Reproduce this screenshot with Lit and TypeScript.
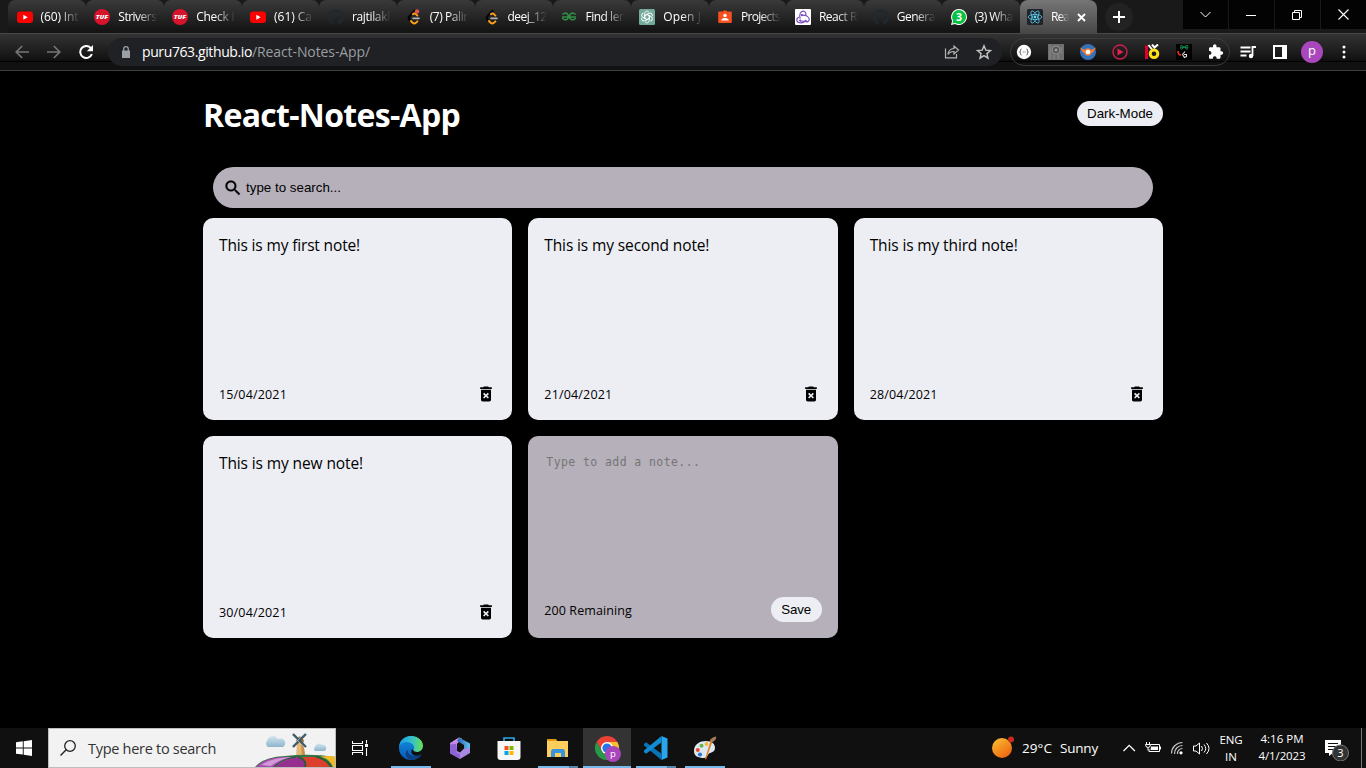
import { LitElement, html, css, svg, nothing } from "lit";
import { customElement, property } from "lit/decorators.js";

/* Text run that spreads its letters over a given width. */
@customElement("fit-text")
class FitText extends LitElement {
  @property({ type: Number }) w = 0;
  @property() text = "";
  static styles = css`
    :host { display: inline-block; white-space: pre; }
    .run { display: inline-block; }
  `;
  render() {
    return html`<span class="run">${this.text}</span>`;
  }
  updated() {
    const run = this.renderRoot.querySelector(".run") as HTMLElement;
    run.style.letterSpacing = "0px";
    const natural = run.getBoundingClientRect().width;
    if (this.w > 0) run.style.letterSpacing = (this.w - natural) / this.text.length + "px";
  }
}

const t = (text: string, w: number) => html`<fit-text .text=${text} .w=${w}></fit-text>`;
const icon = (size: number, box: string, body: unknown) =>
  html`<svg width=${size} height=${size} viewBox=${box}>${body}</svg>`;

const youtube = icon(16, "0 0 16 16", svg`<rect y="2.5" width="16" height="11.5" rx="3" fill="#f00"/><path d="M6.3 5.7v5l4.4-2.5z" fill="#fff"/>`);
const tuf = icon(16, "0 0 16 16", svg`<circle cx="8" cy="8" r="8" fill="#d6142c"/><text x="8" y="10" text-anchor="middle" font-family="Open Sans" font-size="5.6" font-weight="800" font-style="italic" fill="#fff" textLength="12.5" lengthAdjust="spacingAndGlyphs">TUF</text>`);
const github = icon(16, "0 0 16 16", svg`<path fill="#202830" d="M8 0C3.58 0 0 3.58 0 8c0 3.54 2.29 6.53 5.47 7.59.4.07.55-.17.55-.38v-1.49c-2.01.37-2.53-.49-2.69-.94-.09-.23-.48-.94-.82-1.13-.28-.15-.68-.52-.01-.53.63-.01 1.08.58 1.23.82.72 1.21 1.87.87 2.33.66.07-.52.28-.87.51-1.07-1.78-.2-3.64-.89-3.64-3.95 0-.87.31-1.59.82-2.15-.08-.2-.36-1.02.08-2.12 0 0 .67-.21 2.2.82a7.6 7.6 0 0 1 4 0c1.53-1.04 2.2-.82 2.2-.82.44 1.1.16 1.92.08 2.12.51.56.82 1.27.82 2.15 0 3.07-1.87 3.75-3.65 3.95.29.25.54.73.54 1.48v2.2c0 .21.15.46.55.38A8 8 0 0 0 16 8c0-4.42-3.58-8-8-8z"/>`);
const leet = (dot: boolean) => icon(16, "0 0 16 16", svg`<path d="M9.200 1.200 3.400 7.300a2.200 2.200 0 0 0 0 3.200l1.300 1.300" fill="none" stroke="#050505" stroke-width="2.200"/><path d="M5 12 6.600 13.800a2.400 2.400 0 0 0 3.300 0l1.500-1.500M7 5.200a2 2 0 0 1 2.900-.1l1.500 1.500" fill="none" stroke="#ffa116" stroke-width="1.900" stroke-linecap="round"/><path d="M7 9.300h6" stroke="#b3b3b3" stroke-width="1.700" stroke-linecap="round"/>${dot ? svg`<circle cx="11" cy="2.500" r="2.200" fill="#e5534b"/>` : nothing}`);
const gfg = icon(16, "0 0 16 16", svg`<path d="M1 8h14M1.5 5.6A3.3 3.3 0 1 1 1.3 9M14.5 5.6A3.3 3.3 0 1 0 14.7 9" fill="none" stroke="#2f8d46" stroke-width="1.6"/>`);
const openai = icon(16, "0 0 16 16", svg`<rect width="16" height="16" rx="1.5" fill="#74aa9c"/><g fill="none" stroke="#fff" stroke-width=".95">${[0, 60, 120, 180, 240, 300].map((a) => svg`<path transform="rotate(${a} 8 8)" d="M5.7 7V4.6a2.4 2.4 0 0 1 4.2-1.6M5.7 6.7 8 5.4l3.1 1.8"/>`)}</g>`);
const classroom = icon(16, "0 0 16 16", svg`<rect x="1.2" y="2.6" width="13.6" height="11.4" rx="1" fill="#f4511e"/><rect x="6" y="1.6" width="4" height="2.2" rx=".8" fill="#f4511e"/><circle cx="8" cy="6.5" r="1.7" fill="#fff"/><path d="M4.4 11.6V10.4Q6 9 8 9t3.6 1.4v1.2z" fill="#fff"/>`);
const redux = icon(16, "0 0 16 16", svg`<rect width="16" height="16" rx="1" fill="#fff"/><g fill="none" stroke="#764abc" stroke-width="1.15"><path d="M5.200 9.800C3.800 5.500 5.700 2.200 8 2.200c2.300 0 3.400 2 2.800 4.500"/><path d="M10.300 12c-3 3-8.500 2-8.500-1 0-1.500 1-2.600 2.200-2.800"/><path d="M6.800 6.200c4.500-.6 7.900 2.200 7.400 4.700-.3 1.700-2.200 2.400-3.700 1.600L5.400 12"/></g><circle cx="6.900" cy="6.200" r="1.100" fill="#764abc"/><circle cx="5.200" cy="11.600" r="1.100" fill="#764abc"/><circle cx="10.700" cy="11.900" r="1.100" fill="#764abc"/>`);
const whatsapp = icon(16, "0 0 16 16", svg`<path d="M8 0a8 8 0 1 1-3.900 15L0 16l1.100-4A8 8 0 0 1 8 0z" fill="#fff"/><path d="M8 1a7 7 0 1 1-3.600 13l-3 .6.8-2.900A7 7 0 0 1 8 1z" fill="#0ac143"/><text x="8" y="12" text-anchor="middle" font-family="Open Sans" font-size="10.500" font-weight="700" fill="#fff">3</text>`);
const react = icon(16, "0 0 16 16", svg`<rect width="16" height="16" rx="1.500" fill="#20232a"/><g fill="none" stroke="#61dafb" stroke-width=".7"><ellipse cx="8" cy="8" rx="6.800" ry="2.600"/><ellipse cx="8" cy="8" rx="6.800" ry="2.600" transform="rotate(60 8 8)"/><ellipse cx="8" cy="8" rx="6.800" ry="2.600" transform="rotate(120 8 8)"/></g><circle cx="8" cy="8" r="1.400" fill="#61dafb"/>`);

const tabs: [unknown, string, number][] = [
  [youtube, "(60) Int", 38], [tuf, "Strivers", 38], [tuf, "Check i", 38], [youtube, "(61) Ca", 38],
  [github, "rajtilakl", 38], [leet(true), "(7) Palir", 38], [leet(false), "deej_12", 39],
  [gfg, "Find ler", 38], [openai, "Open J", 38], [classroom, "Projects", 39], [redux, "React R", 38],
  [github, "Genera", 38], [whatsapp, "(3) Wha", 38],
];

const extensions = [
  svg`<circle cx="8" cy="8" r="7.200" fill="#fff"/><path d="M5.500 5q-1 0-1 1.500T3.600 8q.9 0 .9 1.500T5.500 11M10.500 5q1 0 1 1.500T12.400 8q-.9 0-.9 1.500t-1 1.500M6.800 8h.8M8.600 8h.8" fill="none" stroke="#444" stroke-width=".9"/>`,
  svg`<rect width="16" height="16" fill="#6e6e6e"/><circle cx="8" cy="6" r="4" fill="#555" stroke="#929292"/><circle cx="8" cy="6" r="1.500" fill="#999"/><path d="M2 1v14M14 3q-2 4 0 7M6 11v4M10 10l1 5" stroke="#888" fill="none"/>`,
  svg`<circle cx="8" cy="8" r="8" fill="#3572b8"/><path d="M0 3.500 5 6h6l5-2.500-3 5-3 1H6l-3-1z" fill="#f0803c"/><circle cx="8" cy="8" r="3.700" fill="#f0803c"/><circle cx="8" cy="8" r="2.300" fill="#fff"/>`,
  svg`<circle cx="8" cy="8" r="7" fill="none" stroke="#c4214b" stroke-width="1.500"/><path d="M5.500 4.500v7L11.500 8z" fill="#e0234e"/>`,
  svg`<path d="M2.500 1.500v13.500" stroke="#e3002b" stroke-width="3"/><path d="m4.500 1 4 5M8 .5l2.500 3L14 .5" stroke="#fff" stroke-width="2" fill="none"/><circle cx="10" cy="9.800" r="3.800" fill="none" stroke="#ffe019" stroke-width="3"/>`,
  svg`<rect width="16" height="16" fill="#000"/><path d="M4 3.200h8.500M4.300 1.800a1.800 1.800 0 1 1 0 2.800M12 1.800a1.800 1.800 0 1 0 0 2.800" fill="none" stroke="#159a5c" stroke-width="1"/><path d="M2 7q0 4 3 4" fill="none" stroke="#ff2a1a" stroke-width="1.600"/><path d="M9 7.500 6.500 10.500l2 3 2-1v-2H8" fill="none" stroke="#ddd" stroke-width="1.100"/>`,
  svg`<path d="M13.500 7.300h-1V4.600c0-.8-.6-1.400-1.400-1.400H8.500V2a1.700 1.700 0 0 0-3.500 0v1.200H2.300C1.500 3.200 1 3.800 1 4.600v2.500h1a1.900 1.900 0 0 1 0 3.700H1v2.600c0 .8.500 1.400 1.300 1.400h2.600v-1a1.900 1.900 0 0 1 3.700 0v1h2.500c.8 0 1.400-.6 1.400-1.400v-2.700h1a1.700 1.700 0 0 0 0-3.400z" fill="#fff"/>`,
];

const trash = icon(20, "0 0 24 24", svg`<path d="M6 19c0 1.100.9 2 2 2h8c1.100 0 2-.9 2-2V7H6v12zm2.460-7.120 1.410-1.410L12 12.590l2.120-2.120 1.410 1.410L13.410 14l2.120 2.120-1.410 1.410L12 15.410l-2.120 2.120-1.410-1.410L10.590 14zM15.500 4l-1-1h-5l-1 1H5v2h14V4z"/>`);

const notes: [string, number, string][] = [
  ["This is my first note!", 141, "15/04/2021"],
  ["This is my second note!", 165, "21/04/2021"],
  ["This is my third note!", 148, "28/04/2021"],
  ["This is my new note!", 144, "30/04/2021"],
];

const edge = icon(24, "0 0 24 24", svg`<defs><linearGradient id="ea" x2="1"><stop stop-color="#1b9de2"/><stop offset=".55" stop-color="#35c1c9"/><stop offset="1" stop-color="#6be052"/></linearGradient><linearGradient id="eb" y2="1" x2="0"><stop stop-color="#1491df"/><stop offset="1" stop-color="#0759b5"/></linearGradient></defs><circle cx="12" cy="12" r="12" fill="url(#eb)"/><path d="M0 12C0 5 5 0 12 0s12 4.500 12 10c0 3.500-2.500 6-6 6-2.500 0-4.200-1-3.600-2.200C17 10 12 5.500 7 6 3 6.300 0 9 0 12z" fill="url(#ea)"/><path d="M8.500 13.500C8 18 13 20.500 17 20c2-.2 3.700-1.200 4.800-1.500.5 0 .6.400.2 1A12 12 0 0 1 13 24C7 23 5 17 8.500 13.500z" fill="#0c3f83"/><path d="M14.400 13.800C13.800 15 15.500 16 18 16c3.500 0 6-2.500 6-6l2 6-4 2.500c-2.500 1.500-6 1.700-8 .2-2-1.500-2.200-4-.8-5.500z" fill="#101010"/>`);
const m365 = icon(24, "0 0 24 24", svg`<defs><linearGradient id="ma" y2="1" x2="0"><stop stop-color="#e8a8f4"/><stop offset="1" stop-color="#6a47c9"/></linearGradient><linearGradient id="mb" x2="1"><stop stop-color="#275cb5"/><stop offset="1" stop-color="#62c4ee"/></linearGradient></defs><path d="m2 7 9-5.500 3 1L9 8v8L5 18.500l-3-2z" fill="url(#ma)"/><path d="m11 1.500 11 6v8l-6-3V9L9 5z" fill="url(#mb)"/><path d="m22 12-6 .5-4 4L9 15l-5 3 8 5 10-6z" fill="#a788e2"/><path d="M2 8.500 8 8v8l4 2.500V23l-10-5.500z" fill="#8e62d3"/>`);
const store = icon(24, "0 0 24 24", svg`<path d="M7 6V2h10v4" fill="none" stroke="#2aa9e8" stroke-width="1.600"/><path d="M.5 5h23v16q0 3-3 3h-17q-3 0-3-3z" fill="#f7f7f7"/><path d="M7.500 10h4v4h-4z" fill="#f25022"/><path d="M12.500 10h4v4h-4z" fill="#7fba00"/><path d="M7.500 15h4v4h-4z" fill="#00a4ef"/><path d="M12.500 15h4v4h-4z" fill="#ffb900"/>`);
const folder = icon(24, "0 0 24 24", svg`<path d="M1 3h9l2 3H1z" fill="#e09a12"/><path d="M1 5h21v16H1z" fill="#fdce5c"/><path d="M5 21v-5.500Q5 13 7 13h10q2 0 2 2.500V21h-4v-4H9v4z" fill="#3793dc"/>`);
const chrome = html`<svg width="26" height="26" viewBox="0 0 26 26"><path d="M12 0a12 12 0 0 1 10.400 6H12L6.800 15 1.600 6A12 12 0 0 1 12 0z" fill="#ea4335"/><path d="M22.400 6A12 12 0 0 1 12 24l5.200-9L12 6z" fill="#fbc02d"/><path d="M1.600 6 6.800 15q2 3.500 6 3L12 24A12 12 0 0 1 1.600 6z" fill="#279847"/><circle cx="12" cy="12" r="6" fill="#fff"/><circle cx="12" cy="12" r="4.600" fill="#2773e8"/><circle cx="18" cy="18" r="8" fill="#a845ba"/><text x="18" y="21" text-anchor="middle" fill="#fff" font-family="Open Sans" font-size="9.500">p</text></svg>`;
const vscode = icon(24, "0 0 24 24", svg`<path d="m17.500 0 6 2.500v19l-6 2.500z" fill="#29a5ee"/><path d="m0 8 2-1.800 15.500 11.600V24L0 9.500z" fill="#0873b7"/><path d="m0 16 2 1.800L17.500 6.200V0L0 14.500z" fill="#128bd2"/>`);
const paint = icon(24, "0 0 24 24", svg`<path d="M1 15C1 8 7 5 13 5s9 3 9 7c0 3-2 4-5 5s-2 5-6 5C5 22 1 20 1 15z" fill="#dce9f2"/><circle cx="4.800" cy="14" r="2" fill="#e64a34"/><circle cx="8.500" cy="9.800" r="2" fill="#69b342"/><circle cx="13.500" cy="8" r="1.900" fill="#f4b63f"/><circle cx="7" cy="18.500" r="2.100" fill="#2c76cb"/><path d="m20 4-7 19.500-1-.5L18 3z" fill="#e58224"/><path d="M17 5q0-3 6-4.500Q24 3 20 6z" fill="#a57a54"/>`);

const apps: [unknown, string][] = [[edge, "open"], [m365, ""], [store, ""], [folder, "open stack"], [chrome, "open active"], [vscode, "open stack"], [paint, "open"]];

@customElement("browser-chrome")
class BrowserChrome extends LitElement {
  static styles = css`
    :host { display: block; height: 71px; font-family: "Open Sans", sans-serif; color: #fff; flex: none; }
    svg { display: block; flex: none; }
    .strip { height: 33px; display: flex; padding-left: 8px; background: #191919; }
    .tab { flex: none; width: 77.850px; box-sizing: border-box; height: 33px; display: flex; align-items: center; gap: 8px; padding: 1px 0 0 8.500px; font-size: 12px; border-radius: 7px 7px 0 0; background: linear-gradient(#3a3a3a, #151515 90%); }
    .tab .label { flex: none; width: 38.500px; white-space: nowrap; line-height: 20px; -webkit-mask-image: linear-gradient(90deg, #000 48%, transparent 102%); }
    .tab .bar { width: 1px; height: 20px; background: #646464; margin-left: -1px; flex: none; }
    .tab.live { background: linear-gradient(#767676, #474747); width: 77px; border-radius: 8px 8px 0 0; padding-left: 7px; }
    .tab.live .label { width: 18px; }
    .plus { flex: none; width: 28px; height: 28px; border-radius: 50%; background: #222; margin: 3px 0 0 8px; display: grid; place-items: center; }
    .win { margin-left: auto; display: flex; gap: 1px; background: #191919; height: 29px; }
    .win div { width: 45px; background: #030303; display: grid; place-items: center; }
    .win svg { margin-right: 1px; }
    .bar2 { height: 37px; box-sizing: border-box; border-top: 1px solid #484848; background: linear-gradient(#333, #151515 65%, #0d0d0d 76%, #000 76%, #000 79%, #111 79%); display: flex; align-items: center; padding: 0 6px; }
    .cell { width: 32px; display: grid; place-items: center; flex: none; }
    .omni { flex: none; width: 894px; height: 28px; border-radius: 14px; background: #202124; margin-left: 6px; display: flex; align-items: center; box-sizing: border-box; padding: 0 2px 0 12px; font-size: 14px; }
    .url { margin-left: 10px; flex: 1; line-height: 20px; display: flex; }
    .dim { color: #9a9ea3; }
    .ext { flex: none; display: flex; width: 220px; height: 28px; align-items: center; border: 1px solid #3c3c3c; box-sizing: border-box; border-radius: 14px; margin: 0 2px 0 8px; }
    .ext .cell:first-child { width: 28px; margin: 0 2px 0 -1px; }
    .line { height: 1px; background: #3d4040; }
    .avatar { width: 22px; height: 22px; border-radius: 50%; background: #a947bc; text-align: center; font-size: 13px; line-height: 19px; }
  `;
  render() {
    return html`
      <div class="strip">
        ${tabs.map(([i, s, w], n) => html`<div class="tab">${i}<div class="label">${t(s, w)}</div>${n < 12 ? html`<div class="bar"></div>` : nothing}</div>`)}
        <div class="tab live">${react}<div class="label">${t("Rea", 18)}</div>${icon(9, "0 0 9 9", svg`<path d="m1 1 7 7M8 1 1 8" stroke="#fff" stroke-width="1.900"/>`)}</div>
        <div class="plus">${icon(12, "0 0 12 12", svg`<path d="M6 0v12M0 6h12" stroke="#fff" stroke-width="2"/>`)}</div>
        <div class="win">
          <div>${icon(11, "0 0 11 11", svg`<path d="m.5 3 5 5 5-5" fill="none" stroke="#fff" stroke-width="1"/>`)}</div>
          <div>${icon(10, "0 0 10 10", svg`<path d="M0 5.500h10" stroke="#fff"/>`)}</div>
          <div>${icon(10, "0 0 10 10", svg`<path d="M.5 2.500h7v7h-7zM2.500 2.500v-2h7v7h-2" fill="none" stroke="#fff"/>`)}</div>
          <div>${icon(11, "0 0 11 11", svg`<path d="m.5.500 10 10M10.500.500l-10 10" stroke="#fff" stroke-width="1.100"/>`)}</div>
        </div>
      </div>
      <div class="bar2">
        <div class="cell">${icon(14, "0 0 14 14", svg`<path d="M14 7H1.200M7.200 1 1.200 7l6 6" fill="none" stroke="#757575" stroke-width="1.700"/>`)}</div>
        <div class="cell">${icon(14, "0 0 14 14", svg`<path d="M0 7h12.800M6.800 1l6 6-6 6" fill="none" stroke="#757575" stroke-width="1.700"/>`)}</div>
        <div class="cell">${icon(14, "0 0 14 14", svg`<path d="M12 3.300A6 6 0 1 0 12.900 9" fill="none" stroke="#fff" stroke-width="2"/><path d="M14 0v6.200H7.800z" fill="#fff"/>`)}</div>
        <div class="omni">
          ${icon(12, "0 0 12 12", svg`<path d="M2 4.500h8V12H2z" fill="#9aa0a6"/><path d="M3.700 5V3a2.300 2.300 0 0 1 4.600 0v2" fill="none" stroke="#9aa0a6" stroke-width="1.300"/>`)}
          <div class="url">${t("puru763.github.io", 110)}<span class="dim">${t("/React-Notes-App/", 118)}</span></div>
          <div class="cell">${icon(16, "0 0 16 16", svg`<path d="M1.500 4.500v9.300h11V10M10 4.500V2l4.500 4L10 10V7.500C7 7.500 5.200 8.500 4 10.500 4.300 7 6.500 4.800 10 4.500z" fill="none" stroke="#b5b5b5" stroke-width="1.200"/>`)}</div>
          <div class="cell">${icon(16, "0 0 16 16", svg`<path d="m8 1.800 1.800 4.300 4.700.4-3.600 3.100L12 14.200 8 11.700l-4 2.500 1.100-4.600-3.600-3.100 4.700-.4z" fill="none" stroke="#c4c4c4" stroke-width="1.400"/>`)}</div>
        </div>
        <div class="ext">${extensions.map((e) => html`<div class="cell">${icon(16, "0 0 16 16", e)}</div>`)}</div>
        <div class="cell">${icon(16, "0 0 16 16", svg`<path d="M.5 3.500h10M.5 7.500h10M.5 11.500h6M12.500 12V3H16" fill="none" stroke="#fff" stroke-width="1.800"/><circle cx="11" cy="12" r="2.200" fill="#fff"/>`)}</div>
        <div class="cell">${icon(14, "0 0 14 14", svg`<path d="M1 1h12v12H1z" fill="none" stroke="#fff" stroke-width="2"/><path d="M9 1h4v12H9z" fill="#fff"/>`)}</div>
        <div class="cell"><div class="avatar">p</div></div>
        <div class="cell">${icon(14, "0 0 14 14", svg`<g fill="#fff"><circle cx="7" cy="2" r="1.500"/><circle cx="7" cy="7" r="1.500"/><circle cx="7" cy="12" r="1.500"/></g>`)}</div>
      </div>
      <div class="line"></div>`;
  }
}

@customElement("notes-app")
class NotesApp extends LitElement {
  static styles = css`
    :host { display: block; height: 657px; background: #000; font-family: "Open Sans", sans-serif; }
    svg { display: block; flex: none; }
    .wrap { width: 960px; margin: 0 auto; }
    .head { height: 96px; box-sizing: border-box; padding-top: 22px; display: flex; justify-content: space-between; align-items: flex-start; }
    h1 { margin: 0; color: #fff; font-size: 32px; line-height: 43px; font-weight: 700; }
    .pill { background: #edeef4; color: #000; border-radius: 15px; height: 25px; display: grid; place-items: center; font: 13.333px "Liberation Sans", sans-serif; }
    .mode { width: 86px; margin-top: 8px; }
    .search { margin: 0 10px; height: 41px; border-radius: 21px; background: #b6b0ba; display: flex; align-items: center; padding-left: 10px; gap: 3px; font: 13.333px "Liberation Sans", sans-serif; }
    .grid { margin-top: 10px; display: grid; grid-template-columns: repeat(3, 1fr); grid-auto-rows: 202px; gap: 16px; }
    .note { background: #edeef4; border-radius: 10px; padding: 16px; display: flex; flex-direction: column; justify-content: space-between; font-size: 15.500px; line-height: 22px; }
    .foot { display: flex; align-items: center; justify-content: space-between; font-size: 12.500px; line-height: 18px; height: 20px; }
    .foot fit-text { margin-top: 1px; }
    .foot svg { margin-right: .4px; margin-bottom: 1px; }
    .new { background: #b6b0ba; }
    .hint { font: 11.500px "DejaVu Sans Mono", monospace; line-height: 20px; color: #757575; padding-left: 2px; }
    .new .foot { height: 25px; }
    .new .foot > fit-text { margin-top: 2px; }
    .save { width: 51px; }
    .pill fit-text { margin-top: 0; }
  `;
  render() {
    return html`<div class="wrap">
      <div class="head"><h1>${t("React-Notes-App", 257)}</h1><div class="pill mode">${t("Dark-Mode", 66)}</div></div>
      <div class="search">${icon(20, "0 0 24 24", svg`<path d="M15.500 14h-.79l-.28-.27A6.470 6.470 0 0 0 16 9.500 6.500 6.500 0 1 0 9.500 16c1.610 0 3.090-.59 4.230-1.570l.27.28v.79l5 4.990L20.490 19zm-6 0C7.010 14 5 11.990 5 9.500S7.010 5 9.500 5 14 7.010 14 9.500 11.990 14 9.500 14z" stroke="#000" stroke-width=".4"/>`)}${t("type to search...", 95)}</div>
      <div class="grid">
        ${notes.map(([s, w, d]) => html`<div class="note"><div>${t(s, w)}</div><div class="foot">${t(d, 68)}${trash}</div></div>`)}
        <div class="note new"><div class="hint">${t("Type to add a note...", 154)}</div><div class="foot">${t("200 Remaining", 87.5)}<div class="pill save">${t("Save", 30)}</div></div></div>
      </div>
    </div>`;
  }
}

@customElement("task-bar")
class TaskBar extends LitElement {
  static styles = css`
    :host { display: flex; height: 40px; background: #101010; color: #fff; font-family: "Open Sans", sans-serif; }
    svg { display: block; flex: none; }
    .cell { width: 48px; display: grid; place-items: center; }
    .search { width: 288px; box-sizing: border-box; border: 1px solid #bdbdbd; background: #f2f2f2; color: #333; display: flex; align-items: center; padding-left: 11px; gap: 12px; font-size: 14.500px; line-height: 22px; }
    .search fit-text { margin-top: 1px; }
    .art { margin-left: auto; }
    .apps { display: flex; gap: 1px; margin-left: 3px; }
    .app { width: 48px; height: 40px; box-sizing: border-box; display: grid; place-items: center; padding: 0; }
    .open { background: linear-gradient(#76b9ed, #76b9ed) 50% 100% / 40px 2px no-repeat; }
    .stack { background: linear-gradient(90deg, #76b9ed 31px, #456b8b 31px, #5986ab 32px) 50% 100% / 40px 2px no-repeat; }
    .active { background: linear-gradient(#76b9ed, #76b9ed) 0 100% / 48px 2px no-repeat, #333; }
    .active svg { margin: 2px 0 0 2px; }
    .tray { margin-left: auto; display: flex; align-items: center; }
    .weather { display: flex; align-items: center; gap: 7px; font-size: 13.500px; margin-right: 23px; }
    .weather .gap { margin-right: 1px; }
    .icons { display: flex; gap: 8px; align-items: center; }
    .duo { font-size: 11.500px; line-height: 17px; text-align: center; }
    .lang { width: 24px; margin-left: 9px; padding-bottom: 1px; }
    .clock { width: 50px; margin-left: 14px; padding-bottom: 2px; }
    .bell { margin-left: 17px; margin-right: 11px; }
    .edge { width: 1px; height: 40px; background: #777; margin-right: 4px; }
  `;
  render() {
    return html`
      <div class="cell">${icon(16, "0 0 16 16", svg`<path d="M0 2.200 6.800 1.300v6.200H0zM7.700 1.200 16 0v7.500H7.700zM0 8.400h6.800v6.200L0 13.700zM7.700 8.400H16V16l-8.300-1.200z" fill="#fff"/>`)}</div>
      <div class="search">
        ${icon(16, "0 0 16 16", svg`<circle cx="10" cy="6" r="5.300" fill="none" stroke="#222" stroke-width="1.300"/><path d="M6.200 9.800.5 15.500" stroke="#222" stroke-width="1.400"/>`)}
        ${t("Type here to search", 128)}
        <svg class="art" width="80" height="38" viewBox="0 0 80 38">
          <defs><linearGradient id="cl" y2="1" x2="0"><stop stop-color="#d3e5ee"/><stop offset="1" stop-color="#8db5cd"/></linearGradient></defs>
          <path d="M13 18a4 4 0 0 1-1-6 6 6 0 0 1 11-2 4 4 0 0 1 5 8z" fill="url(#cl)"/>
          <path d="M60 22a2.800 2.800 0 0 1 0-4 4 4 0 0 1 7-2 3 3 0 0 1 2 6z" fill="url(#cl)"/>
          <path d="M42 13h6L50.500 28H41z" fill="#e6b878"/><path d="M46 14h2l2.500 14H47z" fill="#c98e4c"/><path d="M41 12q4-9 8 0l-1 2h-6z" fill="#9c6838"/>
          <path d="m38 5 13 13M51 5 38 18" stroke="#3d5c66" stroke-width="2.300"/><path d="m37 6 12 12M50 4 37 17" stroke="#a9c0c6" stroke-width=".8"/>
          <path d="M0 38Q8 28 30 27q26-3 50 1v10z" fill="#357447"/>
          <path d="M1 38Q10 28 31 28h11q4 4-2 10z" fill="#a84db0"/><path d="M6 36Q18 28 38 28q-13 2-22 9z" fill="#d298d7"/><path d="M20 38q14-10 23-10 9 3 7 10z" fill="#96308f"/><path d="M19 38q8-8 22-10" fill="none" stroke="#245c38" stroke-width="1.200"/>
          <path d="M51 38q2-5-4-10h13q12 3 15 10z" fill="#dc402c"/>
          <path d="M65 27.500q9-1 15 0V38h-2q-3-8-13-10.500z" fill="#f0ba25"/><path d="M43 28q9 3 7 10M61 27.500q12 4 15 10.500" fill="none" stroke="#245c38" stroke-width="1.600"/>
        </svg>
      </div>
      <div class="cell">${icon(16, "0 0 16 16", svg`<path d="M.5 1v2.500h10V1M.5 15v-2.500h10V15M.5 5.500h10v5H.5zM14.500 0v3.500M14.500 8v8" fill="none" stroke="#fff" stroke-width="1.100"/><path d="M13 4h3v3h-3z" fill="#fff"/>`)}</div>
      <div class="apps">${apps.map(([i, c]) => html`<div class="app ${c}">${i}</div>`)}</div>
      <div class="tray">
        <div class="weather">
          <svg width="23" height="24" viewBox="0 0 23 24"><defs><linearGradient id="sun" x2=".7" y2="1"><stop stop-color="#f9c332"/><stop offset="1" stop-color="#ee6510"/></linearGradient></defs><circle cx="10" cy="12" r="10" fill="url(#sun)"/><circle cx="19" cy="3.500" r="3" fill="#c92b1c"/></svg>
          <span class="gap">${t("29°C", 30)}</span>${t("Sunny", 38)}
        </div>
        <div class="icons">
          ${icon(16, "0 0 16 16", svg`<path d="m2.500 11 5.700-5.700 5.700 5.700" fill="none" stroke="#fff" stroke-width="1.300"/>`)}
          ${icon(16, "0 0 16 16", svg`<path d="M5.500 4.500h9v7H4V9" fill="none" stroke="#fff"/><path d="M6 6.500h7v3.500H5.500z" fill="#fff"/><path d="M15.500 6.500v3M1.500 2v2M4.500 2v2M.5 4.500h5q0 3-2.500 3t-2.500-3M3 7.500v3" fill="none" stroke="#fff"/>`)}
          ${icon(16, "0 0 16 16", svg`<g fill="none" stroke="#c7c7c7" stroke-width="1.200"><path d="M2.500 13.500A11 11 0 0 1 13.500 2.500M5.500 14a8 8 0 0 1 8-8.500M8.500 14a5 5 0 0 1 5-5.500"/></g><circle cx="12" cy="12.800" r="1.600" fill="#fff"/>`)}
          ${icon(17, "0 0 17 16", svg`<path d="M.5 5.500H3L6.500 2.500v11L3 10.500H.5zM8.500 5.500q2 2.500 0 5M11 4q3.500 4 0 8M13.500 2.500q5 5.500 0 11" fill="none" stroke="#fff"/>`)}
        </div>
        <div class="duo lang">${t("ENG", 23)}<br>${t("IN", 12)}</div>
        <div class="duo clock">${t("4:16 PM", 43)}<br>${t("4/1/2023", 47)}</div>
        <svg class="bell" width="26" height="26" viewBox="0 0 26 26"><path d="M1 5h16v13h-8l-4 3v-3H1z" fill="#fff"/><path d="M4 8.500h10M4 11.500h10M4 14.500h6" stroke="#111"/><circle cx="16.500" cy="18" r="8" fill="#333" stroke="#777"/><text x="16.500" y="22" text-anchor="middle" fill="#fff" font-family="Open Sans" font-size="11">3</text></svg>
        <div class="edge"></div>
      </div>`;
  }
}

@customElement("app-root")
class AppRoot extends LitElement {
  static styles = css`
    :host { display: flex; flex-direction: column; width: 1366px; height: 768px; overflow: hidden; background: #000; }
  `;
  render() {
    return html`<browser-chrome></browser-chrome><notes-app></notes-app><task-bar></task-bar>`;
  }
}
